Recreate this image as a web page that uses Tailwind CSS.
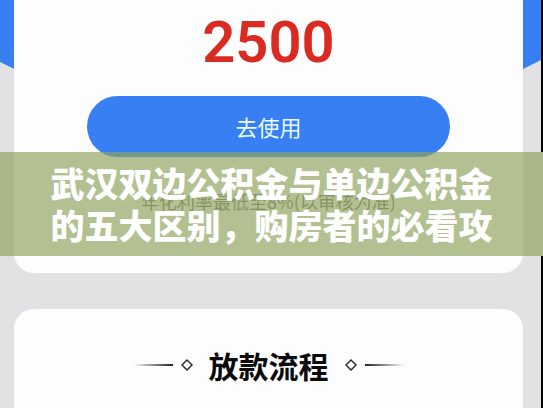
<!DOCTYPE html>
<html lang="zh-CN">
<head>
<meta charset="utf-8">
<meta name="viewport" content="width=device-width, initial-scale=1">
<title>武汉双边公积金与单边公积金的五大区别</title>
<script src="https://cdn.jsdelivr.net/npm/@tailwindcss/browser@4"></script>
</head>
<body class="font-['Noto_Sans_CJK_SC',sans-serif]">
<div class="relative h-screen overflow-hidden border-r-2 border-black bg-[#e2e2e4]">
  <!-- Blue backdrop that tapers to a point behind the first card -->
  <svg class="absolute inset-x-0 top-0 h-[200px] w-full" viewBox="0 0 541 200" preserveAspectRatio="none" aria-hidden="true">
    <path d="M0 0H541V60L270 195L0 62Z" fill="#377ff2"/>
  </svg>

  <main class="relative flex flex-col gap-9 pr-[18px] pl-[14px]">
    <section class="flex flex-col items-center rounded-b-[20px] bg-[#fdfdfd] px-[73px] pt-3 pb-[60px]">
      <p class="font-['Roboto',sans-serif] text-[58px] leading-[60px] font-semibold text-[#d92b21]">2500</p>
      <button type="button" class="mt-6 h-[61px] w-full rounded-full bg-[#377ff2] pb-0.5 text-[22px] leading-8 text-[#e6fbff]">去使用</button>
      <p class="mt-8 text-lg leading-6 whitespace-nowrap text-[#777777]">年化利率最低至8%(以审核为准)</p>
    </section>

    <section class="h-40 rounded-t-[20px] bg-[#fdfdfd] pt-[35px]">
      <div class="flex items-center justify-center gap-2">
        <span class="h-0.5 w-10 bg-linear-to-r from-transparent to-[#222222]"></span>
        <svg class="size-3" viewBox="0 0 12 12" fill="none" stroke="#222222" stroke-width="1.4" aria-hidden="true"><path d="M6 1L11 6L6 11L1 6Z"/></svg>
        <h2 class="mx-2 text-[30px] leading-[42px] font-bold text-[#0b0b0b]">放款流程</h2>
        <svg class="size-3" viewBox="0 0 12 12" fill="none" stroke="#222222" stroke-width="1.4" aria-hidden="true"><path d="M6 1L11 6L6 11L1 6Z"/></svg>
        <span class="h-0.5 w-10 bg-linear-to-l from-transparent to-[#222222]"></span>
      </div>
    </section>
  </main>
</div>

<!-- Title banner laid over the page -->
<header class="absolute inset-x-0 top-[152px] border-r-2 border-[#a9b78a] bg-[#8da25c]/67 pr-12 pl-[50px] py-[10px]">
  <h1 class="mx-auto w-[442px] text-[34px] leading-[42px] font-black text-white">武汉双边公积金与单边公积金的五大区别，购房者的必看攻</h1>
</header>
</body>
</html>
